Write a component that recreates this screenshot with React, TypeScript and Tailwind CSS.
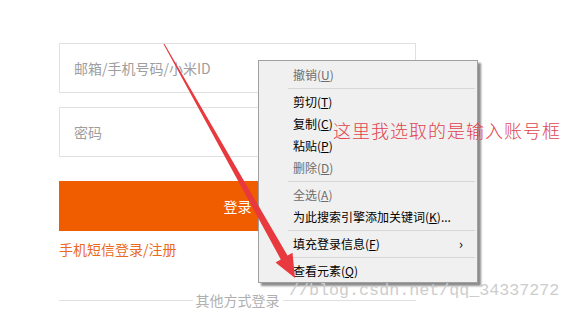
import React from 'react';

const font = { fontFamily: '"Noto Sans CJK SC", "Noto Sans", sans-serif' };

type Item = { label: string; key: string; tail?: string; disabled?: boolean; sub?: boolean } | 'sep';

const items: Item[] = [
  { label: '撤销', key: 'U', disabled: true },
  'sep',
  { label: '剪切', key: 'T' },
  { label: '复制', key: 'C' },
  { label: '粘贴', key: 'P' },
  { label: '删除', key: 'D', disabled: true },
  'sep',
  { label: '全选', key: 'A', disabled: true },
  { label: '为此搜索引擎添加关键词', key: 'K', tail: '...' },
  'sep',
  { label: '填充登录信息', key: 'F', sub: true },
  'sep',
  { label: '查看元素', key: 'Q' },
];

const ContextMenu: React.FC = () => (
  <div className="absolute left-[258px] top-[60px] w-[220px] border border-[#a0a0a0] bg-[#f0f0f0] pt-[3px] shadow-[3px_3px_2px_rgba(0,0,0,0.45)] text-[12px]">
    {items.map((it, i) =>
      it === 'sep' ? (
        <div key={i} className="h-[5px] flex items-center pl-[29px] pr-[2px]">
          <div className="h-px w-full bg-[#d7d7d7]" />
        </div>
      ) : (
        <div
          key={i}
          className={`h-[22px] flex items-center pl-[34px] pr-[14px] ${it.disabled ? 'text-[#6d6d6d]' : 'text-[#000]'}`}
        >
          <span>
            {it.label}(<u>{it.key}</u>){it.tail}
          </span>
          {it.sub && <span className="ml-auto text-[13px]">›</span>}
        </div>
      )
    )}
  </div>
);

const Arrow: React.FC = () => (
  <svg className="absolute left-0 top-0 pointer-events-none" width="573" height="311">
    <polygon
      points="163.6,44.2 164.4,43.8 287.5,255.6 292.5,252.8 295,278 275.5,262.5 280.8,259.4"
      fill="#e8393e"
    />
  </svg>
);

export default function App() {
  return (
    <div className="relative w-[573px] h-[311px] overflow-hidden bg-white" style={font}>
      <div className="pl-[59px] pt-[43px] w-[416px]">
        <div className="h-[50px] border border-[#e0e0e0] flex items-center pl-[14px] text-[14px] text-[#9e9e9e]">
          邮箱/手机号码/小米ID
        </div>
        <div className="mt-[14px] h-[50px] border border-[#e0e0e0] flex items-center pl-[14px] text-[14px] text-[#9e9e9e]">
          密码
        </div>
        <div className="mt-[24px] h-[50px] bg-[#f05d00] flex items-center justify-center text-[14px] text-white">
          登录
        </div>
        <div className="mt-[8px] h-[20px] flex items-center text-[14px] text-[#ea6a1e]">手机短信登录/注册</div>
        <div className="mt-[33px] flex items-center gap-[3px]">
          <div className="h-px flex-1 bg-[#e0e0e0]" />
          <span className="text-[14px] text-[#b0b0b0] leading-[16px]">其他方式登录</span>
          <div className="h-px flex-1 bg-[#e0e0e0]" />
        </div>
      </div>

      <ContextMenu />

      <div className="absolute left-[333px] top-[117px] text-[18px] tracking-[1px] font-light text-[#e0434d] leading-[26px]">
        这里我选取的是输入账号框
      </div>

      <div
        className="absolute left-[289px] top-[280px] text-[16.7px] leading-[22px] text-[#cdcdcd]"
        style={{ fontFamily: '"Liberation Mono", monospace' }}
      >
        //blog.csdn.net/qq_34337272
      </div>

      <Arrow />
    </div>
  );
}
